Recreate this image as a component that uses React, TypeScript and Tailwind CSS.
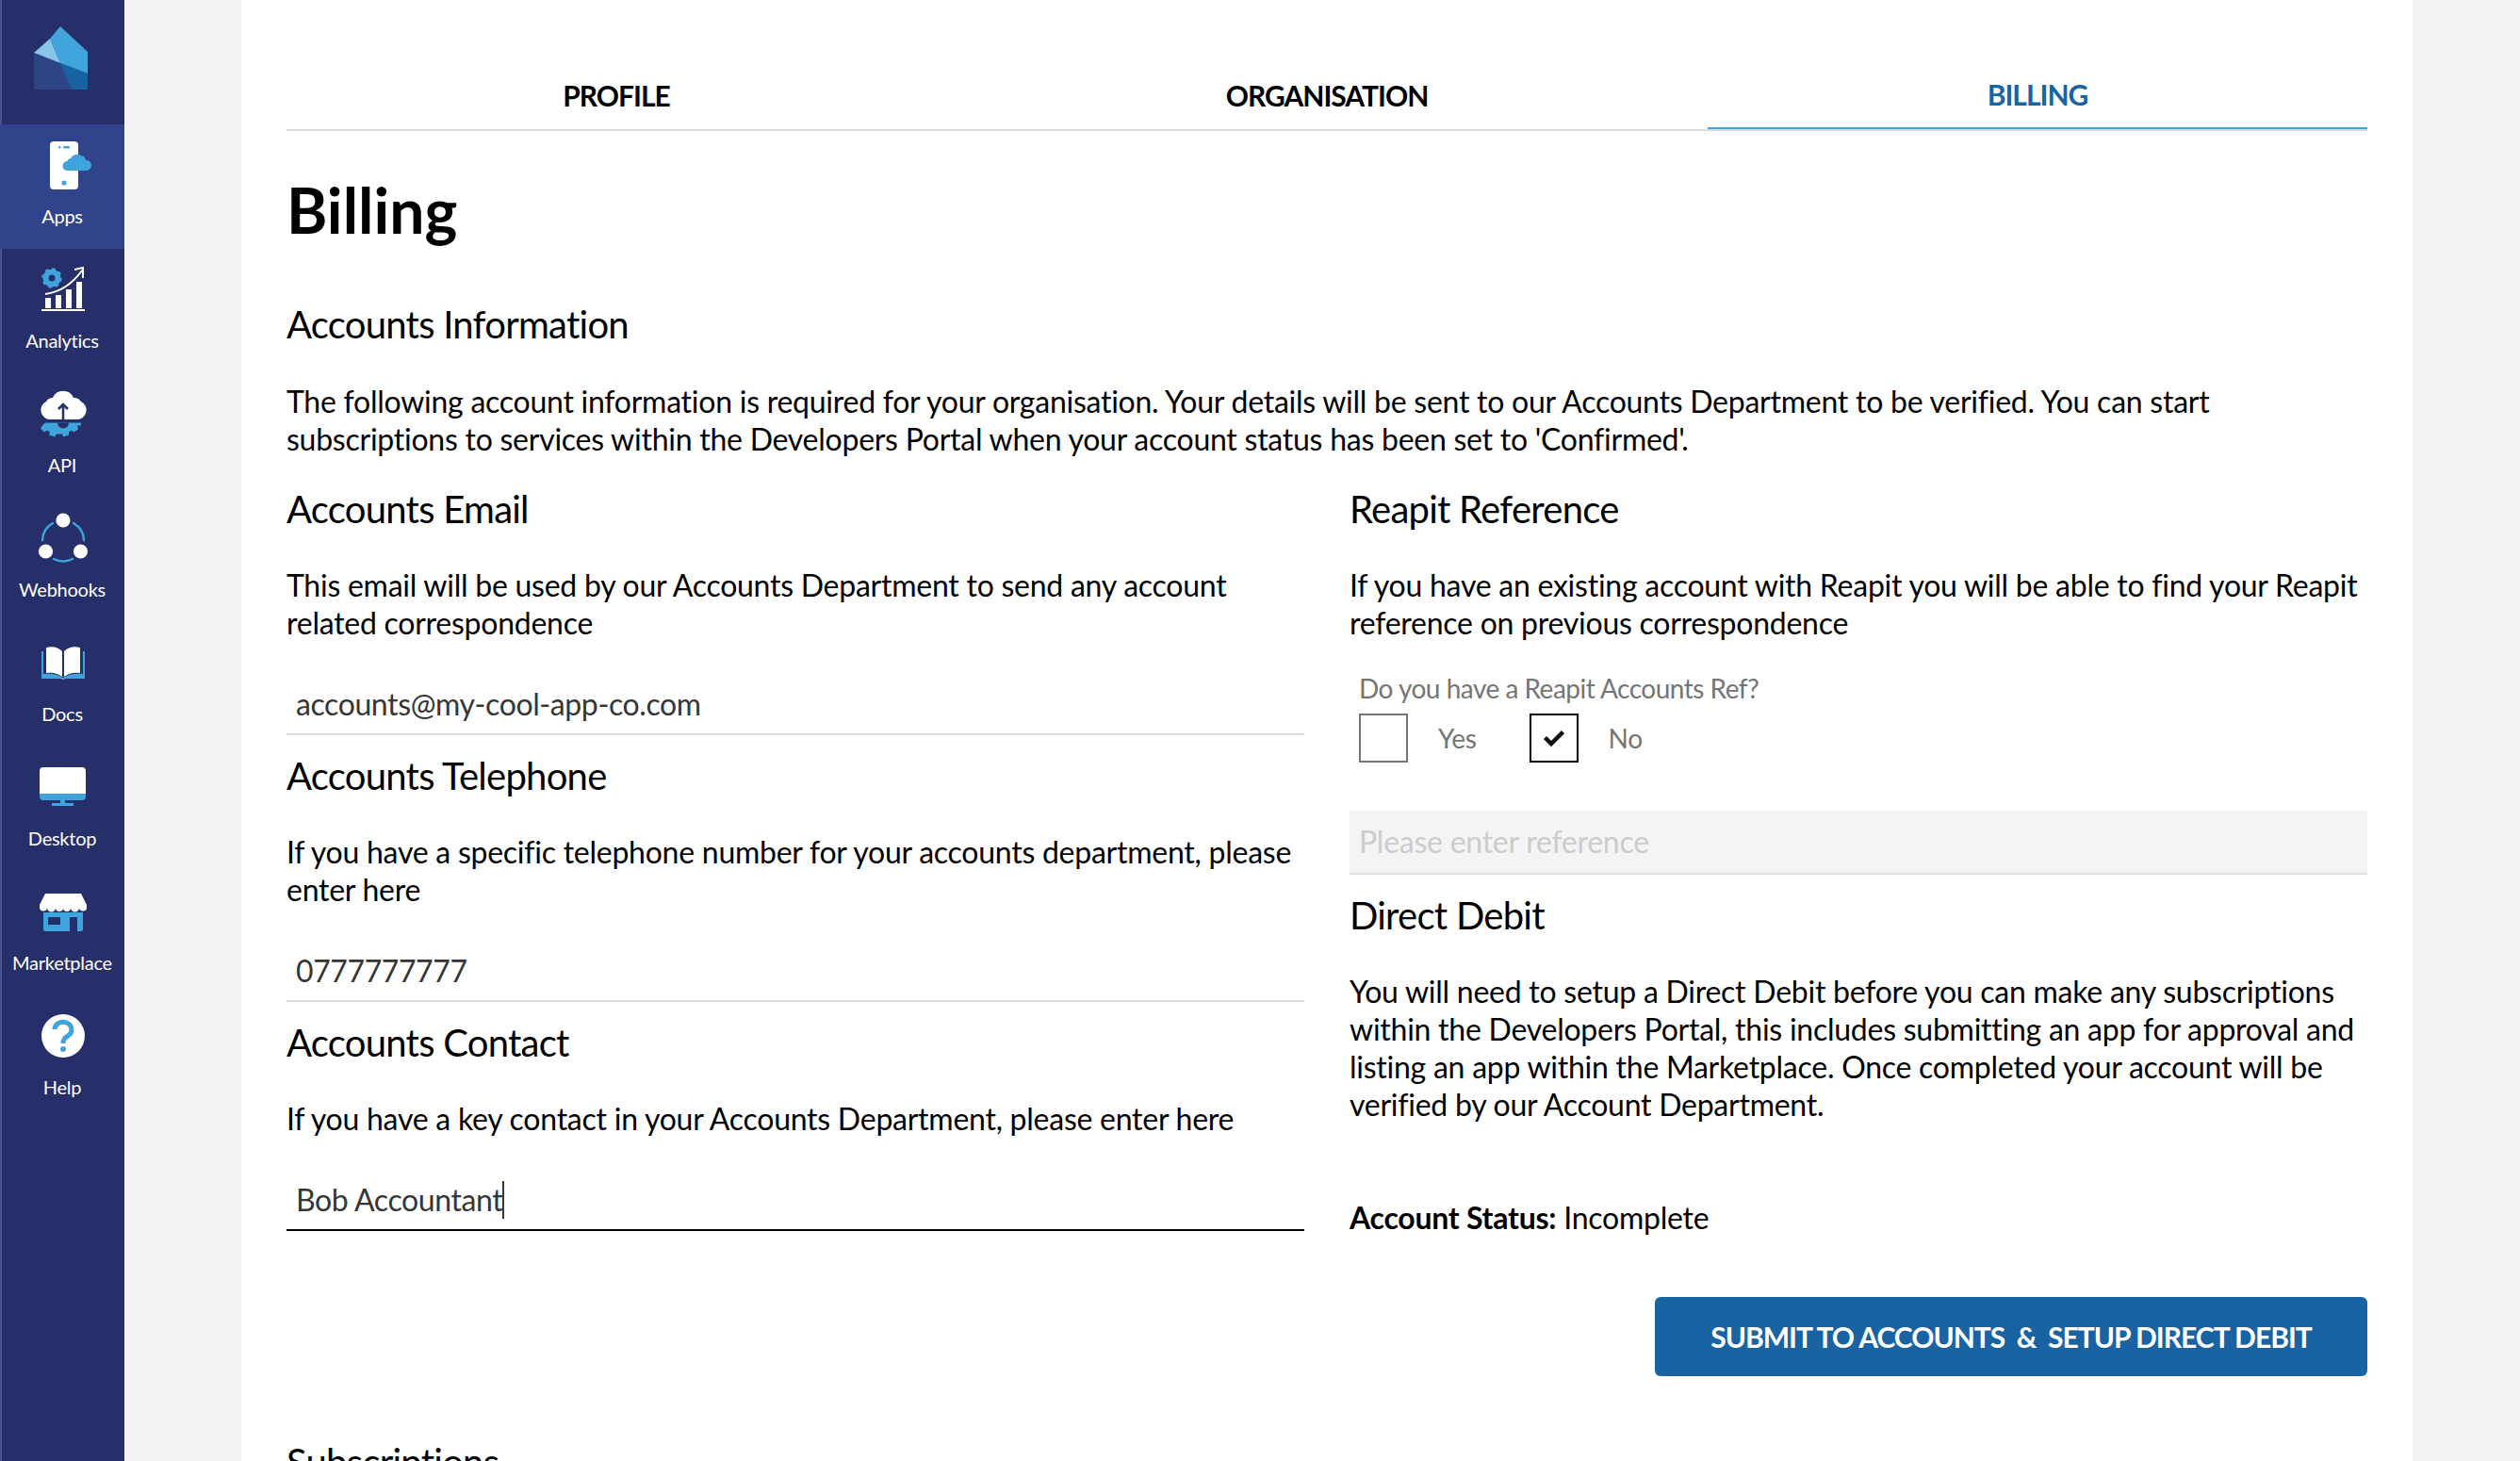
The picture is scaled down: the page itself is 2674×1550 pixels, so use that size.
import type { ReactNode } from "react";

const navy = "#262f69";
const sky = "#3fa4dc";

function AppsIcon() {
  return (
    <svg width="70" height="60" viewBox="0 0 70 60">
      <rect x="22" y="4" width="30" height="51" rx="4" fill="#fff" />
      <rect x="31" y="9" width="2.5" height="2.5" rx="1.2" fill={sky} />
      <rect x="36" y="9" width="7" height="2.5" rx="1.2" fill={sky} />
      <circle cx="37" cy="48" r="2.6" fill={sky} />
      <path d="M41 35a5 5 0 0 1-1-10 5 5 0 0 1 4-3 7.500 7.500 0 0 1 11-3 6 6 0 0 1 5 5 5.500 5.500 0 0 1 1 11z" fill={sky} />
    </svg>
  );
}

function AnalyticsIcon() {
  return (
    <svg width="70" height="60" viewBox="0 0 70 60">
      <circle cx="24" cy="17" r="6.500" fill="none" stroke={sky} strokeWidth="6" />
      <circle cx="24" cy="17" r="9.500" fill="none" stroke={sky} strokeWidth="2.500" strokeDasharray="3.500 3.960" />
      <path d="M17 38h6v11h-6zM28 35h6v14h-6zM39 29h6v20h-6zM50 21h6v28h-6zM13 50h46v2H13z" fill="#fff" />
      <path d="M17 34Q40 31 56 9" fill="none" stroke="#fff" strokeWidth="2" />
      <path d="M48 8L57 6L57 17" fill="none" stroke="#fff" strokeWidth="2" />
    </svg>
  );
}

function ApiIcon() {
  return (
    <svg width="70" height="60" viewBox="0 0 70 60">
      <path d="M22 35a10 10 0 0 1-4-19 9 9 0 0 1 7-4 12 12 0 0 1 22 0 9 9 0 0 1 8 4 10 10 0 0 1-4 19z" fill="#fff" />
      <path d="M36 35V20M31 24l5-5 5 5" fill="none" stroke={navy} strokeWidth="2.500" />
      <path d="M17 38.500h38v3h-4l1 4-5 3-2-2-3 2v3l-6 2-1-3h-6l-2 3-6-2 1-3-3-2-3 2-4-4 2-3z" fill={sky} />
      <path d="M30 38.500a6 6 0 0 0 12 0z" fill={navy} />
    </svg>
  );
}

function WebhooksIcon() {
  return (
    <svg width="70" height="60" viewBox="0 0 70 60">
      <g fill="none" stroke={sky} strokeWidth="2.500" strokeLinecap="round">
        <path d="M47 13A22 22 0 0 1 58 31" />
        <path d="M25 13A22 22 0 0 0 14 31" />
        <path d="M26 51A22 22 0 0 0 46 51" />
      </g>
      <circle cx="36" cy="10" r="7.600" fill="#fff" />
      <circle cx="17.500" cy="43" r="7.600" fill="#fff" />
      <circle cx="54.500" cy="43" r="7.600" fill="#fff" />
    </svg>
  );
}

function DocsIcon() {
  return (
    <svg width="70" height="60" viewBox="0 0 70 60">
      <path d="M13 17h2v24c7-1 15 0 21 4 6-4 14-5 21-4V17h2v29H39l-3 1-3-1H13z" fill={sky} />
      <path d="M18 13c7-2 13 0 17 4v27c-5-4-11-5-17-4z" fill="#fff" />
      <path d="M54 13c-7-2-13 0-17 4v27c5-4 11-5 17-4z" fill="#fff" />
    </svg>
  );
}

function DesktopIcon() {
  return (
    <svg width="70" height="60" viewBox="0 0 70 60">
      <path d="M11 36h49v3a4 4 0 0 1-4 4H15a4 4 0 0 1-4-4z" fill={sky} />
      <path d="M15 8h41a4 4 0 0 1 4 4v24H11V12a4 4 0 0 1 4-4z" fill="#fff" />
      <path d="M33 43h5v3h9v3H24v-3h9z" fill={sky} />
    </svg>
  );
}

function MarketplaceIcon() {
  return (
    <svg width="70" height="60" viewBox="0 0 70 60">
      <path d="M15 30h42v18a2 2 0 0 1-2 2h-4V35h-8v15H17a2 2 0 0 1-2-2zM20 35v8h13v-8z" fill={sky} fillRule="evenodd" />
      <path d="M17 10h38l6 12v2a4 4 0 0 1-8 1 4 4 0 0 1-9 0 4 4 0 0 1-8 0 4 4 0 0 1-8 0 4 4 0 0 1-9 0 4 4 0 0 1-8-1v-2z" fill="#fff" />
    </svg>
  );
}

function HelpIcon() {
  return (
    <svg width="70" height="60" viewBox="0 0 70 60">
      <circle cx="36" cy="29" r="23" fill="#fff" />
      <path d="M27 22a9 8 0 1 1 14 7c-3 2-5 3-5 8" fill="none" stroke={sky} strokeWidth="5" />
      <circle cx="36" cy="43" r="3" fill={sky} />
    </svg>
  );
}

function Logo() {
  return (
    <svg width="132" height="132" viewBox="0 0 132 132">
      <polygon points="53,41 64,28 93,55 93,78 64,67" fill="#41a5dc" />
      <polygon points="36,56 53,41 64,67" fill="#87c6e8" />
      <polygon points="36,57 64,67 76,95 36,95" fill="#2d4585" />
      <polygon points="64,67 93,78 93,95 76,95" fill="#1a63a3" />
    </svg>
  );
}

const navItems: { label: string; icon: ReactNode; active?: boolean }[] = [
  { label: "Apps", icon: <AppsIcon />, active: true },
  { label: "Analytics", icon: <AnalyticsIcon /> },
  { label: "API", icon: <ApiIcon /> },
  { label: "Webhooks", icon: <WebhooksIcon /> },
  { label: "Docs", icon: <DocsIcon /> },
  { label: "Desktop", icon: <DesktopIcon /> },
  { label: "Marketplace", icon: <MarketplaceIcon /> },
  { label: "Help", icon: <HelpIcon /> },
];

function Sidebar() {
  return (
    <aside className="flex h-full w-[132px] shrink-0 flex-col border-l-2 border-[#4a5590] bg-[#262f69]">
      <div className="-ml-[2px] h-[132px]">
        <Logo />
      </div>
      {navItems.map((item) => (
        <div
          key={item.label}
          className={`-ml-[2px] flex h-[132px] flex-col items-center pt-[14px] ${item.active ? "bg-[#31448b]" : ""}`}
        >
          {item.icon}
          <span className="mt-[9px] text-[20px] leading-[28px] text-white">{item.label}</span>
        </div>
      ))}
    </aside>
  );
}

function Tab({ label, active }: { label: string; active?: boolean }) {
  return (
    <div
      className={`flex h-[82px] items-center justify-center pt-[10px] text-[30px] font-bold tracking-[-1px] ${
        active ? "border-b-2 border-[#3fa4dc] text-[#1a63a3]" : "text-black"
      }`}
    >
      {label}
    </div>
  );
}

function SectionTitle({ children, className = "" }: { children: ReactNode; className?: string }) {
  return <h3 className={`text-[40px] leading-[48px] tracking-[-0.75px] text-black ${className}`}>{children}</h3>;
}

function Para({ children, className = "" }: { children: ReactNode; className?: string }) {
  return <p className={`text-[32px] leading-[40px] text-black ${className}`}>{children}</p>;
}

function TextField({ value, focused }: { value: string; focused?: boolean }) {
  return (
    <div
      className={`mt-[35px] flex h-[64px] items-center px-[10px] text-[32px] tracking-[-0.4px] text-[#363636] ${
        focused ? "border-b-2 border-black" : "border-b-2 border-[#dbdbdb]"
      }`}
    >
      {value}
      {focused && <span className="h-[40px] w-[2px] bg-[#363636]" />}
    </div>
  );
}

function FieldBlock({
  title,
  text,
  value,
  focused,
}: {
  title: string;
  text: ReactNode;
  value: string;
  focused?: boolean;
}) {
  return (
    <div className="mb-[19px]">
      <SectionTitle>{title}</SectionTitle>
      <Para className="mt-[37px]">{text}</Para>
      <TextField value={value} focused={focused} />
    </div>
  );
}

function CheckOption({ label, checked }: { label: string; checked?: boolean }) {
  return (
    <div className="flex items-center">
      <span
        className={`flex h-[52px] w-[52px] items-center justify-center border-2 ${
          checked ? "border-black" : "border-[#757575]"
        }`}
      >
        {checked && (
          <svg width="22" height="18" viewBox="0 0 22 18">
            <path d="M1.500 8.500l6.500 6.500L20.500 2.500" fill="none" stroke="#111" strokeWidth="4.500" />
          </svg>
        )}
      </span>
      <span className="ml-[32px] text-[28px] text-[#757575]">{label}</span>
    </div>
  );
}

export default function App() {
  return (
    <div
      className="flex h-[1550px] overflow-hidden bg-[#f2f2f2] tracking-[-0.25px]"
      style={{ fontFamily: '"Lato", "Open Sans", sans-serif' }}
    >
      <Sidebar />
      <main className="ml-[124px] h-full w-[2304px] shrink-0 overflow-hidden bg-white px-[48px]">
        <div className="grid grid-cols-3 gap-[54px] border-b-2 border-[#dbdbdb] pt-[55px]">
          <Tab label="PROFILE" />
          <Tab label="ORGANISATION" />
          <Tab label="BILLING" active />
        </div>
        <h1 className="mt-[44px] text-[66px] font-bold leading-[80px] tracking-normal text-black">Billing</h1>
        <SectionTitle className="mt-[57px]">Accounts Information</SectionTitle>
        <Para className="mt-[38px] max-w-[2060px]">
          The following account information is required for your organisation. Your details will be sent to our
          Accounts Department to be verified. You can start subscriptions to services within the Developers Portal
          when your account status has been set to 'Confirmed'.
        </Para>
        <div className="mt-[30px] grid grid-cols-2 gap-x-[48px]">
          <div>
            <FieldBlock
              title="Accounts Email"
              text="This email will be used by our Accounts Department to send any account related correspondence"
              value="accounts@my-cool-app-co.com"
            />
            <FieldBlock
              title="Accounts Telephone"
              text="If you have a specific telephone number for your accounts department, please enter here"
              value="0777777777"
            />
            <FieldBlock
              title="Accounts Contact"
              text="If you have a key contact in your Accounts Department, please enter here"
              value="Bob Accountant"
              focused
            />
          </div>
          <div>
            <SectionTitle>Reapit Reference</SectionTitle>
            <Para className="mt-[37px]">
              If you have an existing account with Reapit you will be able to find your Reapit reference on previous
              correspondence
            </Para>
            <div className="mt-[31px] px-[10px] text-[28px] leading-[36px] tracking-[-0.5px] text-[#757575]">
              Do you have a Reapit Accounts Ref?
            </div>
            <div className="mt-[9px] flex gap-[56px] px-[10px]">
              <CheckOption label="Yes" />
              <CheckOption label="No" checked />
            </div>
            <div className="mt-[51px] flex h-[68px] items-center border-b-2 border-[#e0e0e0] bg-[#f4f4f4] px-[10px] text-[32px] text-[#cccccc]">
              Please enter reference
            </div>
            <SectionTitle className="mt-[19px]">Direct Debit</SectionTitle>
            <Para className="mt-[37px]">
              You will need to setup a Direct Debit before you can make any subscriptions within the Developers
              Portal, this includes submitting an app for approval and listing an app within the Marketplace. Once
              completed your account will be verified by our Account Department.
            </Para>
            <Para className="mt-[80px]">
              <strong className="font-bold">Account Status:</strong> Incomplete
            </Para>
            <div className="mt-[64px] flex justify-end">
              <button
                type="button"
                className="h-[84px] w-[756px] rounded-[6px] bg-[#1a63a3] text-[30px] font-bold tracking-[-1px] text-white"
              >
                SUBMIT TO ACCOUNTS&nbsp; &amp;&nbsp; SETUP DIRECT DEBIT
              </button>
            </div>
          </div>
        </div>
        <SectionTitle className="mt-[67px]">Subscriptions</SectionTitle>
      </main>
    </div>
  );
}
